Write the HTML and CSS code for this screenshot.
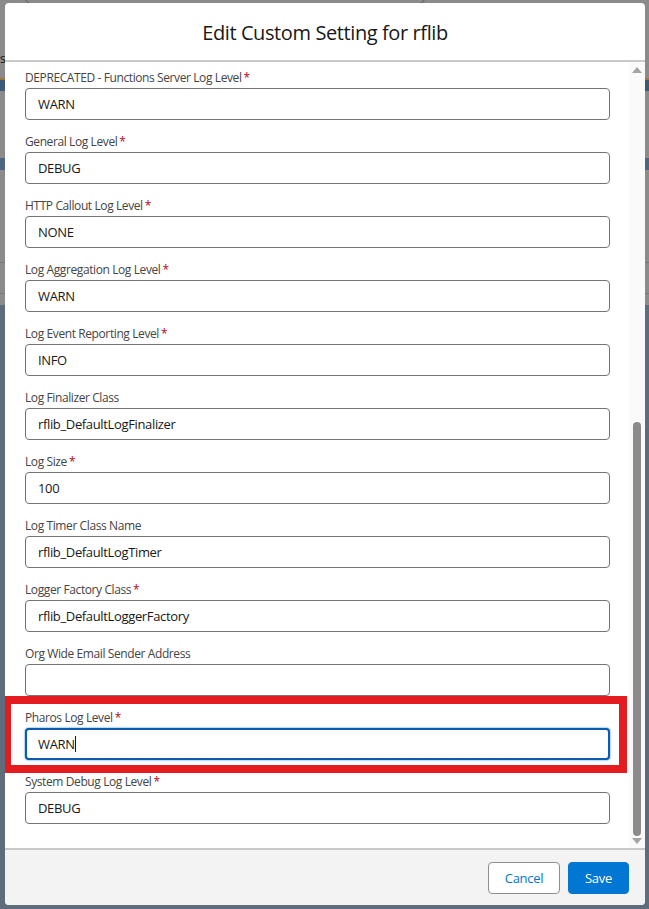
FILE: index.html
```html
<!DOCTYPE html>
<html lang="en">
<head>
<meta charset="utf-8">
<title>Edit Custom Setting for rflib</title>
<link rel="stylesheet" href="styles.css">
</head>
<body>
<div class="backdrop-search"></div>
<div class="backdrop-mark">s</div>
<section class="modal">
  <header class="modal-header">
    <h2 class="modal-title">Edit Custom Setting for rflib</h2>
  </header>
  <div class="modal-body">
    <div class="modal-content">
      <div class="field"><label class="field-label">DEPRECATED - Functions Server Log Level<abbr class="req">*</abbr></label><div class="input">WARN</div></div>
      <div class="field"><label class="field-label">General Log Level<abbr class="req">*</abbr></label><div class="input">DEBUG</div></div>
      <div class="field"><label class="field-label">HTTP Callout Log Level<abbr class="req">*</abbr></label><div class="input">NONE</div></div>
      <div class="field"><label class="field-label">Log Aggregation Log Level<abbr class="req">*</abbr></label><div class="input">WARN</div></div>
      <div class="field"><label class="field-label">Log Event Reporting Level<abbr class="req">*</abbr></label><div class="input">INFO</div></div>
      <div class="field"><label class="field-label">Log Finalizer Class</label><div class="input">rflib_DefaultLogFinalizer</div></div>
      <div class="field"><label class="field-label">Log Size<abbr class="req">*</abbr></label><div class="input">100</div></div>
      <div class="field"><label class="field-label">Log Timer Class Name</label><div class="input">rflib_DefaultLogTimer</div></div>
      <div class="field"><label class="field-label">Logger Factory Class<abbr class="req">*</abbr></label><div class="input">rflib_DefaultLoggerFactory</div></div>
      <div class="field"><label class="field-label">Org Wide Email Sender Address</label><div class="input"></div></div>
      <div class="field"><label class="field-label">Pharos Log Level<abbr class="req">*</abbr></label><div class="input input-focus">WARN<span class="caret"></span></div></div>
      <div class="field"><label class="field-label">System Debug Log Level<abbr class="req">*</abbr></label><div class="input">DEBUG</div></div>
      <div class="highlight"></div>
    </div>
    <div class="scrollbar">
      <span class="arrow arrow-up"></span>
      <div class="track"><div class="thumb"></div></div>
      <span class="arrow arrow-down"></span>
    </div>
  </div>
  <footer class="modal-footer">
    <button class="btn btn-neutral">Cancel</button>
    <button class="btn btn-brand">Save</button>
  </footer>
</section>
</body>
</html>
```

FILE: styles.css
```css
* { box-sizing: border-box; }

html, body { margin: 0; padding: 0; }

body {
  width: 649px;
  height: 909px;
  overflow: hidden;
  position: relative;
  font-family: "Open Sans", "Noto Sans", Arial, sans-serif;
  color: #181818;
  background:
    linear-gradient(to bottom,
      #8b8b8b 0, #8b8b8b 78px,
      #9a7a3c 78px, #9a7a3c 80px,
      #3f5874 80px, #3f5874 91px,
      #8b8b8b 91px, #8b8b8b 158px,
      #4e6680 158px, #4e6680 170px,
      #8b8b8b 170px, #8b8b8b 262px,
      #777 262px, #777 263px,
      #8b8b8b 263px, #8b8b8b 293px,
      #7a7a7a 293px, #7a7a7a 294px,
      #8b8b8b 294px, #8b8b8b 305px,
      #5f6c7b 305px, #5f6c7b 100%);
  padding: 3px 4px 4px 5px;
}

.backdrop-search {
  position: absolute;
  left: 25px;
  top: -20px;
  width: 400px;
  height: 24px;
  border: 1px solid #5a5a5a;
  border-radius: 6px;
}

.backdrop-mark {
  position: absolute;
  left: 0;
  top: 52px;
  font-size: 12px;
  line-height: 14px;
  color: #111;
}

.modal {
  position: relative;
  width: 640px;
  height: 902px;
  background: #fff;
  border-radius: 4px;
  display: flex;
  flex-direction: column;
  overflow: hidden;
}

.modal-header {
  height: 59px;
  flex: none;
  border-bottom: 2px solid #c9c9c9;
  display: flex;
  align-items: center;
  justify-content: center;
}

.modal-title {
  margin: 0;
  font-size: 20px;
  font-weight: 400;
  letter-spacing: -0.4px;
  color: #181818;
  padding-top: 2px;
}

.modal-body {
  flex: 1;
  display: flex;
  min-height: 0;
}

.modal-content {
  position: relative;
  flex: 1;
  padding: 5px 0 0 20px;
}

.field {
  width: 585px;
  margin-bottom: 11px;
}

.field-label {
  display: block;
  font-size: 12px;
  line-height: 19px;
  height: 20px;
  padding-top: 1px;
  margin-bottom: 1px;
  color: #444;
  letter-spacing: -0.4px;
}

.req {
  color: #ba0517;
  text-decoration: none;
  margin-left: 2px;
}

.input {
  height: 32px;
  border: 1px solid #747474;
  border-radius: 4px;
  padding: 0 12px;
  font-size: 13px;
  line-height: 30px;
  letter-spacing: -0.35px;
  color: #181818;
  background: #fff;
}

.input-focus {
  border: 2px solid #0b5cab;
  padding-left: 11px;
  line-height: 28px;
  box-shadow: 0 0 2px #0176d3;
}

.caret {
  display: inline-block;
  width: 1px;
  height: 16px;
  background: #181818;
  vertical-align: -3px;
}

.highlight {
  position: absolute;
  left: -2px;
  top: 634px;
  width: 624px;
  height: 77px;
  border: 8px solid #e41c1f;
  pointer-events: none;
}

.scrollbar {
  flex: none;
  width: 16px;
  background: #fafafa;
  display: flex;
  flex-direction: column;
  align-items: center;
  padding: 4px 0 3px;
}

.arrow {
  width: 0;
  height: 0;
  border-left: 5px solid transparent;
  border-right: 5px solid transparent;
  flex: none;
}

.arrow-up {
  border-bottom: 6px solid #a3a3a3;
  margin-top: 1px;
}

.arrow-down {
  border-top: 6px solid #a3a3a3;
  margin-bottom: 1px;
}

.track {
  flex: 1;
  width: 8px;
  display: flex;
  flex-direction: column;
  justify-content: flex-end;
  padding: 4px 0 2px;
}

.thumb {
  height: 414px;
  background: #8b8b8b;
  border-radius: 4px;
}

.modal-footer {
  flex: none;
  height: 57px;
  background: #f3f3f3;
  border-top: 2px solid #c9c9c9;
  display: flex;
  justify-content: flex-end;
  align-items: flex-start;
  gap: 8px;
  padding: 12px 16px 0 0;
}

.btn {
  height: 32px;
  border-radius: 4px;
  font-family: inherit;
  font-size: 13px;
  letter-spacing: -0.3px;
  padding: 0;
  cursor: pointer;
}

.btn-neutral {
  width: 72px;
  background: #fff;
  color: #0176d3;
  border: 1px solid #8e8e8e;
}

.btn-brand {
  width: 61px;
  background: #0176d3;
  color: #fff;
  border: 1px solid #0176d3;
}
```
